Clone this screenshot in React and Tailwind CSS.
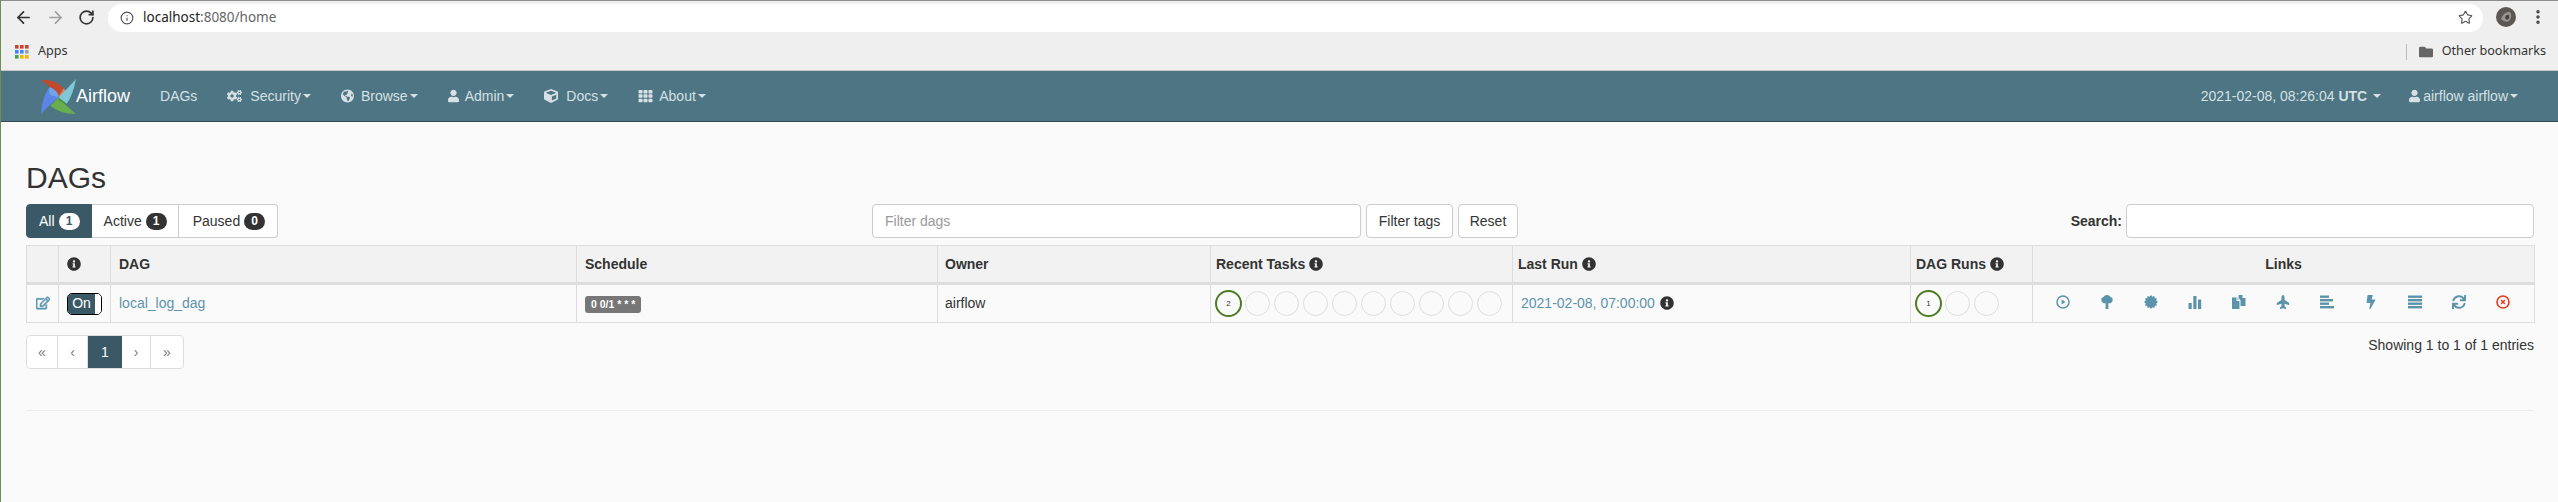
import React from "react";
import { ArrowLeft, ArrowRight, RotateCw, Info, Star, EllipsisVertical } from "lucide-react";
import { FaCogs, FaGlobeAmericas, FaUser, FaCube, FaTh, FaInfoCircle, FaRegEdit, FaPlane, FaBolt, FaSync, FaFolder } from "react-icons/fa";

const Caret = () => (
  <span className="inline-block ml-[2px] w-0 h-0 border-x-[4px] border-t-[4px] border-x-transparent border-t-current align-middle" />
);

const AppsIcon = () => {
  const colors = ["#c9422f", "#c9422f", "#c9422f", "#4285f4", "#4285f4", "#9aa0a6", "#34a853", "#f4b400", "#f4b400"];
  return (
    <svg width="14" height="14" viewBox="0 0 14 14">
      {colors.map((c, i) => (
        <rect key={i} x={(i % 3) * 5} y={Math.floor(i / 3) * 5} width="3.6" height="3.6" fill={c} />
      ))}
    </svg>
  );
};

const Logo = () => (
  <svg width="35" height="35" viewBox="0 0 34 34" className="shrink-0">
    <path d="M0 1 Q14 0 22 9 L17 17 Q9 7 0 1Z" fill="#c2492c" />
    <path d="M17 17 L22 9 Q25 12 24 16Z" fill="#de8265" />
    <path d="M34 0 Q31 16 25 24 L17 18 Q25 10 34 0Z" fill="#7fc8d6" />
    <path d="M34 34 Q18 34 9 26 L17 18 Q25 27 34 34Z" fill="#68ad4e" />
    <path d="M17 18 L25 24 Q21 24 17 21Z" fill="#4d9a45" />
    <path d="M0 34 Q1 18 8 8 L17 18 Q8 25 0 34Z" fill="#5b86e8" />
    <path d="M8 8 Q13 9 17 15 L17 18 L8 15Z" fill="#6fa4ea" />
  </svg>
);

const NavItem = ({ icon: Icon, label, iconClass }) => (
  <a className="flex items-center px-[15px] h-full">
    <Icon className={iconClass} />
    {label}
    <Caret />
  </a>
);

const Badge = ({ children, light }) => (
  <span className={`ml-[4px] inline-flex items-center justify-center w-[21px] h-[17px] rounded-[10px] text-[12px] font-bold ${light ? "bg-white text-[#3a5866]" : "bg-[#333] text-white"}`}>
    {children}
  </span>
);

const RunCircle = ({ label }) => (
  <span className="shrink-0 -mr-[1px] inline-flex items-center justify-center w-[27px] h-[27px] rounded-full border-2 border-[#4d7c21] text-[8px] text-[#333]">
    {label}
  </span>
);

const EmptyCircle = () => <span className="shrink-0 w-[25px] h-[25px] rounded-full border border-[#dedede]" />;

const G = ({ children, color = "#5b93ab" }) => (
  <svg width="14" height="14" viewBox="0 0 14 14" fill={color}>
    {children}
  </svg>
);

const burst = Array.from({ length: 24 }, (_, i) => {
  const r = i % 2 ? 5.4 : 7;
  const a = (i * Math.PI) / 12;
  return `${(7 + r * Math.cos(a)).toFixed(2)},${(7 + r * Math.sin(a)).toFixed(2)}`;
}).join(" ");

const linkIcons = [
  <G key="run">
    <circle cx="7" cy="7" r="6" fill="none" stroke="#5b93ab" strokeWidth="1.5" />
    <path d="M5.6 4.4 L9.6 7 L5.6 9.6Z" />
  </G>,
  <G key="tree">
    <path d="M7 0 C9 0 10 1 10.4 2 C12.4 2.4 13 4 12.6 5.4 C12.4 7.4 10.6 8.4 8.4 8.2 L8.4 14 L5.6 14 L5.6 8.2 C3.4 8.4 1.6 7.4 1.4 5.4 C1 4 1.6 2.4 3.6 2 C4 1 5 0 7 0Z" />
  </G>,
  <G key="cert">
    <polygon points={burst} />
  </G>,
  <G key="stats">
    <rect x="0.5" y="8" width="3.2" height="6" />
    <rect x="5.3" y="1" width="3.2" height="13" />
    <rect x="10" y="4.5" width="3.2" height="9.5" />
  </G>,
  <G key="dup">
    <path d="M0 2.5 L4.5 2.5 L4.5 6 L7.5 6 L7.5 14 L0 14Z" />
    <path d="M5.5 2.5 L7 4.5 L5.5 4.5Z" />
    <path d="M6.5 0 L10.5 0 L10.5 3 L13.5 3 L13.5 11 L8.5 11 L8.5 5.5 L6.5 2.5Z" />
  </G>,
  <FaPlane key="plane" className="text-[14px] text-[#5b93ab] -rotate-90" />,
  <G key="gantt">
    <rect x="0" y="0.5" width="9" height="2.4" />
    <rect x="0" y="4" width="13" height="2.4" />
    <rect x="0" y="7.5" width="9" height="2.4" />
    <rect x="0" y="11" width="14" height="2.4" />
  </G>,
  <FaBolt key="bolt" className="text-[14px] text-[#5b93ab]" />,
  <G key="justify">
    <rect x="0" y="0.5" width="14" height="2.4" />
    <rect x="0" y="4" width="14" height="2.4" />
    <rect x="0" y="7.5" width="14" height="2.4" />
    <rect x="0" y="11" width="14" height="2.4" />
  </G>,
  <FaSync key="sync" className="text-[14px] text-[#5b93ab]" />,
  <G key="remove" color="#e2391f">
    <circle cx="7" cy="7" r="6" fill="none" stroke="#e2391f" strokeWidth="1.6" />
    <path d="M4.6 5.6 L5.6 4.6 L7 6 L8.4 4.6 L9.4 5.6 L8 7 L9.4 8.4 L8.4 9.4 L7 8 L5.6 9.4 L4.6 8.4 L6 7Z" />
  </G>,
];

const Th = ({ children, className = "px-[8px] text-left" }) => (
  <th className={`border border-b-0 border-[#ddd] font-bold align-middle ${className}`}>{children}</th>
);

const Td = ({ children, className = "px-[8px]" }) => (
  <td className={`border border-[#ddd] align-middle ${className}`}>{children}</td>
);

const HeadInfo = ({ label }) => (
  <span className="inline-flex items-center gap-[4px]">
    {label} <FaInfoCircle className="text-[14px]" />
  </span>
);

const pages = [
  { label: "«", w: "w-[31px]" },
  { label: "‹", w: "w-[30px]" },
  { label: "1", w: "w-[34px]", active: true },
  { label: "›", w: "w-[29px]" },
  { label: "»", w: "w-[32px]" },
];

export default function App() {
  return (
    <div className="h-[502px] overflow-hidden bg-[#fafafa] border-l border-[#6f8f52] font-['Liberation_Sans',sans-serif] text-[14px] text-[#333]">
      {/* Browser chrome */}
      <div className="bg-[#efefef] border-b border-[#c9c9c9]">
        <div className="h-[33px] flex items-center border-t border-[#8d8d8d]">
          <div className="w-[107px] flex items-center pl-[13px] gap-[13px]">
            <ArrowLeft size={19} strokeWidth={2.2} className="text-[#333]" />
            <ArrowRight size={19} strokeWidth={2.2} className="text-[#a0a0a0]" />
            <RotateCw size={17} strokeWidth={2.4} className="text-[#333]" />
          </div>
          <div className="w-[2375px] h-[28px] bg-white rounded-full flex items-center pl-[12px] pr-[10px] font-['Noto_Sans',sans-serif] text-[13.5px] mt-[1px]">
            <Info size={14} className="text-[#555] mr-[9px]" />
            <span className="text-[#222]">localhost</span>
            <span className="text-[#666]">:8080/home</span>
            <Star size={15} strokeWidth={1.8} className="ml-auto text-[#555]" />
          </div>
          <svg width="20" height="20" viewBox="0 0 20 20" className="ml-[13px]">
            <circle cx="10" cy="10" r="10" fill="#5b5853" />
            <path d="M5 12 Q8 4 14 5 Q17 9 13 14 Q9 16 5 12Z" fill="#96958f" />
            <path d="M9 11 Q10 7 13 8 Q14 11 11 13Z" fill="#43413e" />
          </svg>
          <EllipsisVertical size={18} strokeWidth={2.6} className="ml-[13px] text-[#444]" />
        </div>
        <div className="h-[37px] flex items-center pl-[14px] pr-[12px] font-['Noto_Sans',sans-serif] text-[12.6px] text-[#333]">
          <AppsIcon />
          <span className="ml-[9px]">Apps</span>
          <span className="ml-auto h-[16px] border-l border-[#bbb] mr-[12px]" />
          <FaFolder className="text-[14px] text-[#666] mr-[9px]" />
          <span>Other bookmarks</span>
        </div>
      </div>

      {/* Navbar */}
      <nav className="h-[51px] bg-[#4d7583] border-b border-[#2f4a55] flex items-center justify-between text-[#d7e0e4] pl-[40px] pr-[25px]">
        <div className="flex items-center h-full">
          <Logo />
          <span className="text-white text-[18px] leading-none mr-[15px]">Airflow</span>
          <a className="flex items-center px-[15px] h-full">DAGs</a>
          <NavItem icon={FaCogs} label="Security" iconClass="w-[15px] mr-[8px]" />
          <NavItem icon={FaGlobeAmericas} label="Browse" iconClass="w-[13px] mr-[7px]" />
          <NavItem icon={FaUser} label="Admin" iconClass="w-[11px] mr-[6px]" />
          <NavItem icon={FaCube} label="Docs" iconClass="w-[14px] mr-[8px]" />
          <NavItem icon={FaTh} label="About" iconClass="w-[15px] mr-[6px]" />
        </div>
        <div className="flex items-center h-full">
          <a className="flex items-center px-[14px] h-full">
            2021-02-08, 08:26:04&nbsp;<b>UTC</b>
            <span className="ml-[6px] inline-block w-0 h-0 border-x-[4px] border-t-[4px] border-x-transparent border-t-current" />
          </a>
          <a className="flex items-center pl-[14px] pr-[15px] h-full">
            <FaUser className="w-[11px] mr-[3px]" />
            airflow airflow
            <Caret />
          </a>
        </div>
      </nav>

      {/* Page */}
      <main className="pl-[25px] pr-[24px]">
        <h2 className="mt-[39px] text-[30px] leading-[33px] font-normal">DAGs</h2>

        <div className="mt-[10px] grid grid-cols-[846px_654px_1fr] h-[34px]">
          <div className="flex">
            <a className="h-[34px] flex items-center pl-[12px] pr-[11px] bg-[#3a5866] border border-[#3a5866] text-white rounded-l-[4px]">
              All<Badge light>1</Badge>
            </a>
            <a className="h-[34px] flex items-center pl-[12px] pr-[11px] bg-white border border-l-0 border-[#ccc]">
              Active<Badge>1</Badge>
            </a>
            <a className="h-[34px] flex items-center pl-[14px] pr-[12px] bg-white border border-l-0 border-[#ccc] rounded-r-[4px]">
              Paused<Badge>0</Badge>
            </a>
          </div>
          <div className="flex gap-[5px]">
            <input
              placeholder="Filter dags"
              className="w-[489px] h-[34px] px-[12px] bg-white border border-[#ccc] rounded-[4px] placeholder:text-[#999] outline-none"
            />
            <button className="w-[87px] h-[34px] bg-white border border-[#ccc] rounded-[4px]">Filter tags</button>
            <button className="w-[60px] h-[34px] bg-white border border-[#ccc] rounded-[4px]">Reset</button>
          </div>
          <div className="flex justify-end items-center gap-[4px]">
            <label className="font-bold">Search:</label>
            <input className="w-[408px] h-[34px] bg-white border border-[#ccc] rounded-[4px] outline-none" />
          </div>
        </div>

        <table className="mt-[7px] w-[2508px] table-fixed border-collapse">
          <colgroup>
            <col className="w-[32px]" />
            <col className="w-[52px]" />
            <col className="w-[466px]" />
            <col className="w-[361px]" />
            <col className="w-[273px]" />
            <col className="w-[302px]" />
            <col className="w-[398px]" />
            <col className="w-[122px]" />
            <col className="w-[502px]" />
          </colgroup>
          <thead>
            <tr className="h-[38px] bg-[#f2f2f2] border-b-[3px] border-[#ddd]">
              <Th />
              <Th>
                <FaInfoCircle className="text-[14px]" />
              </Th>
              <Th>DAG</Th>
              <Th>Schedule</Th>
              <Th className="px-[7px] text-left">Owner</Th>
              <Th className="px-[5px] text-left">
                <HeadInfo label="Recent Tasks" />
              </Th>
              <Th className="px-[5px] text-left">
                <HeadInfo label="Last Run" />
              </Th>
              <Th className="px-[5px] text-left">
                <HeadInfo label="DAG Runs" />
              </Th>
              <Th className="text-center">Links</Th>
            </tr>
          </thead>
          <tbody>
            <tr className="h-[39px]">
              <Td className="text-center">
                <FaRegEdit className="inline text-[14px] text-[#5b97b2] mb-[3px] stroke-[24px]" />
              </Td>
              <Td>
                <span className="flex w-[35px] h-[22px] rounded-[5px] border border-black overflow-hidden">
                  <span className="w-[27px] bg-[#3a5866] text-white flex items-center justify-center text-[14px]">On</span>
                  <span className="flex-1 bg-white rounded-l-[3px]" />
                </span>
              </Td>
              <Td>
                <a className="text-[#5d93ac]">local_log_dag</a>
              </Td>
              <Td>
                <span className="inline-flex items-center h-[17px] px-[6px] rounded-[3px] bg-[#777] text-white text-[10.5px] font-bold">0 0/1 * * *</span>
              </Td>
              <Td className="px-[7px]">airflow</Td>
              <Td className="px-[4px]">
                <div className="flex items-center gap-[4px]">
                  <RunCircle label="2" />
                  {Array.from({ length: 9 }).map((_, i) => (
                    <EmptyCircle key={i} />
                  ))}
                </div>
              </Td>
              <Td>
                <span className="inline-flex items-center gap-[5px]">
                  <a className="text-[#5d93ac]">2021-02-08, 07:00:00</a>
                  <FaInfoCircle className="text-[14px] mb-[2px]" />
                </span>
              </Td>
              <Td className="px-[4px]">
                <div className="flex items-center gap-[4px]">
                  <RunCircle label="1" />
                  <EmptyCircle />
                  <EmptyCircle />
                </div>
              </Td>
              <Td className="px-0">
                <div className="flex items-center pl-[8px]">
                  {linkIcons.map((icon, i) => (
                    <span key={i} className="w-[44px] flex justify-center mb-[3px]">
                      {icon}
                    </span>
                  ))}
                </div>
              </Td>
            </tr>
          </tbody>
        </table>

        <div className="mt-[12px] flex justify-between items-start">
          <div className="flex h-[34px] bg-white border border-[#ddd] rounded-[4px] overflow-hidden">
            {pages.map((p) => (
              <a
                key={p.label}
                className={`${p.w} flex items-center justify-center ${p.active ? "bg-[#3a5866] text-white" : "text-[#777] border-r border-[#ddd] last:border-r-0"}`}
              >
                {p.label}
              </a>
            ))}
          </div>
          <div>Showing 1 to 1 of 1 entries</div>
        </div>

        <hr className="mt-[41px] border-[#eee]" />
      </main>
    </div>
  );
}
